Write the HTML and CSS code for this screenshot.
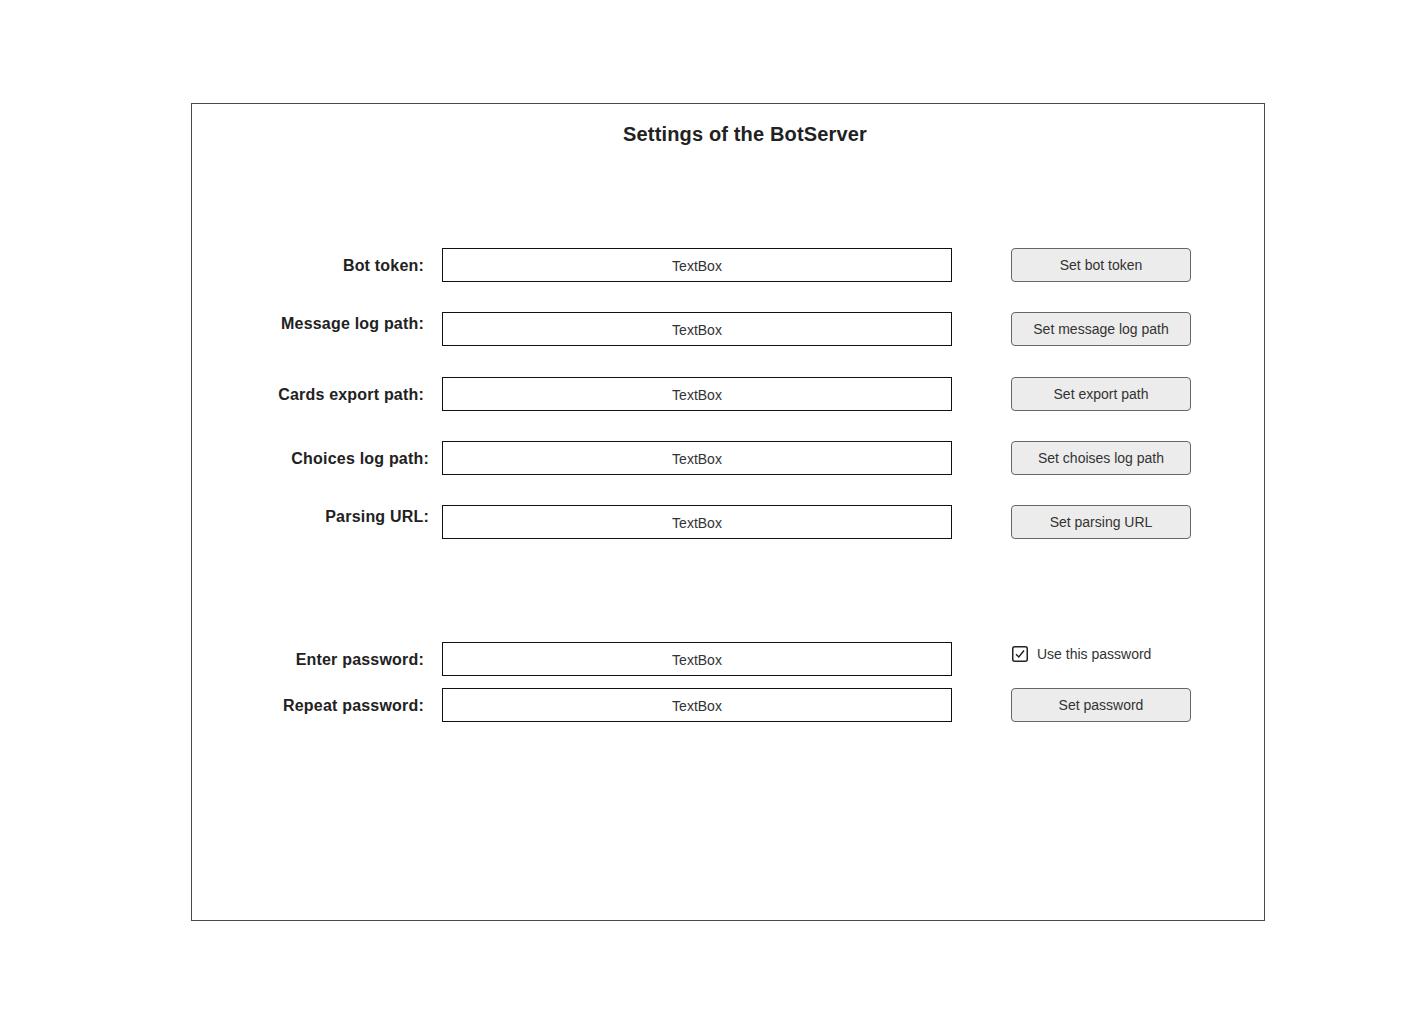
FILE: index.html
```html
<!DOCTYPE html>
<html lang="en">
<head>
    <meta charset="UTF-8">
    <title>Settings of the BotServer</title>
    <link rel="stylesheet" href="styles.css">
</head>
<body>
    <div class="frame">
        <h1>Settings of the BotServer</h1>
        <div class="rows">
            <div class="row">
                <label class="label label--short">Bot token:</label>
                <div class="textbox">TextBox</div>
                <button class="btn">Set bot token</button>
            </div>
            <div class="row">
                <label class="label label--short label--high">Message log path:</label>
                <div class="textbox">TextBox</div>
                <button class="btn">Set message log path</button>
            </div>
            <div class="row row--extra">
                <label class="label label--short">Cards export path:</label>
                <div class="textbox">TextBox</div>
                <button class="btn">Set export path</button>
            </div>
            <div class="row">
                <label class="label">Choices log path:</label>
                <div class="textbox">TextBox</div>
                <button class="btn">Set choises log path</button>
            </div>
            <div class="row">
                <label class="label label--high">Parsing URL:</label>
                <div class="textbox">TextBox</div>
                <button class="btn">Set parsing URL</button>
            </div>
        </div>
        <div class="rows rows--password">
            <div class="row">
                <label class="label label--short">Enter password:</label>
                <div class="textbox">TextBox</div>
                <div class="check">
                    <svg width="16" height="16" viewBox="0 0 16 16">
                        <rect x="0.75" y="0.75" width="14.5" height="14.5" rx="2" fill="#fff" stroke="#222" stroke-width="1.5"/>
                        <path d="M4 8.2 L6.8 11 L12 4.5" fill="none" stroke="#222" stroke-width="1.5"/>
                    </svg>
                    <span>Use this password</span>
                </div>
            </div>
            <div class="row">
                <label class="label label--short">Repeat password:</label>
                <div class="textbox">TextBox</div>
                <button class="btn">Set password</button>
            </div>
        </div>
    </div>
</body>
</html>
```

FILE: styles.css
```css
body {
    margin: 0;
    background: #fff;
    font-family: "Liberation Sans", Arial, sans-serif;
    color: #222;
}
.frame {
    box-sizing: border-box;
    width: 1074px;
    height: 818px;
    margin: 103px 0 0 191px;
    border: 1px solid #4a4a4a;
    padding-top: 18px;
}
h1 {
    margin: 0;
    text-align: center;
    font-size: 20px;
    line-height: 24px;
    font-weight: bold;
    letter-spacing: 0.15px;
    color: #222;
    padding-left: 34px;
}
.rows {
    display: flex;
    flex-direction: column;
    gap: 30px;
    margin-top: 102px;
}
.rows--password {
    margin-top: 103px;
    gap: 12px;
}
.row {
    display: flex;
    align-items: center;
    height: 34px;
}
.row--extra {
    margin-top: 1px;
}
.label {
    box-sizing: border-box;
    width: 237px;
    margin-right: 13px;
    padding-top: 2px;
    text-align: right;
    font-size: 16px;
    font-weight: bold;
    letter-spacing: 0.2px;
    line-height: 20px;
    color: #222;
}
.label--short {
    padding-right: 5px;
}
.label--high {
    padding-bottom: 12px;
}
.textbox {
    box-sizing: border-box;
    width: 510px;
    height: 34px;
    border: 1px solid #111;
    padding-top: 1px;
    font-size: 14px;
    line-height: 32px;
    text-align: center;
    color: #333;
}
.btn {
    box-sizing: border-box;
    width: 180px;
    height: 34px;
    margin-left: 59px;
    background: #ececec;
    border: 1px solid #666;
    border-radius: 4px;
    font-family: "Liberation Sans", Arial, sans-serif;
    font-size: 14px;
    color: #333;
    padding: 0;
}
.check {
    display: flex;
    align-items: center;
    gap: 9px;
    margin-left: 60px;
    align-self: flex-start;
    margin-top: 4px;
    font-size: 14px;
    color: #333;
}
.check svg {
    display: block;
}
```
